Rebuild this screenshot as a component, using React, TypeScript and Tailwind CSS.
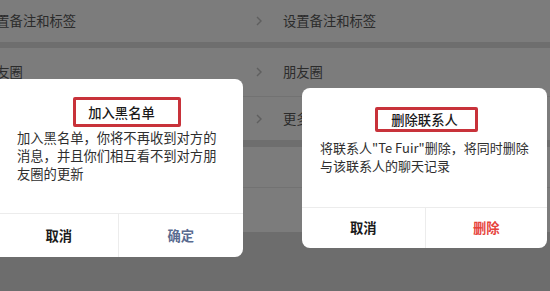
function Chevron() {
    return (
        <svg width="6" height="10" viewBox="0 0 6 10" className="shrink-0">
            <polyline points="1,1 5,5 1,9" fill="none" stroke="#5f5f5f" strokeWidth="1.4" />
        </svg>
    );
}

function Row({ h, left, right, chevron = true }: { h: string; left: string; right: string; chevron?: boolean }) {
    return (
        <div className={`flex ${h}`}>
            {/* left phone */}
            <div className="w-[275px] flex items-center justify-between overflow-hidden pr-[13px]">
                <span className="-ml-[17px] whitespace-nowrap">{left}</span>
                {chevron && <Chevron />}
            </div>
            {/* right phone */}
            <div className="flex-1 flex items-center pl-[8px] overflow-hidden">
                <span className="whitespace-nowrap">{right}</span>
            </div>
        </div>
    );
}

export default function App() {
    return (
        <div className="relative w-[550px] h-[291px] overflow-hidden bg-[#6d6d6d] text-[13.3px] text-[#2b2b2b] font-['Noto_Sans_CJK_SC','Noto_Sans',sans-serif]">

            {/* BACKGROUND LIST */}
            <div className="flex flex-col bg-[#7c7c7c]">
                <Row h="h-[42px]" left="设置备注和标签" right="设置备注和标签" />
                <div className="h-[6px] bg-[#6e6e6e]" />
                <Row h="h-[49px] border-b border-[#727272]" left="朋友圈" right="朋友圈" />
                <Row h="h-[43px]" left="更多信息" right="更多信息" />
                <div className="h-[7px] bg-[#6e6e6e]" />
                <Row h="h-[41px] border-b border-[#727272]" left="" right="" chevron={false} />
                <Row h="h-[44px]" left="" right="" chevron={false} />
            </div>

            {/* LEFT DIALOG */}
            <div className="absolute left-[-8px] top-[79px] w-[251px] h-[178px] bg-white rounded-lg flex flex-col">
                <div className="pt-[24px] pl-[8px] text-center leading-[20px] text-[#1a1a1a] font-medium">
                    加入黑名单
                </div>
                <div className="mt-[6px] pl-[25px] pr-[20px] leading-[18px] text-[#2e2e2e]">
                    加入黑名单，你将不再收到对方的消息，并且你们相互看不到对方朋友圈的更新
                </div>
                <div className="flex-1" />
                <div className="grid grid-cols-2 h-[44px] border-t border-[#ececec] font-bold">
                    <div className="flex items-center justify-center pl-[8px] text-[#1a1a1a]">取消</div>
                    <div className="flex items-center justify-center border-l border-[#ececec] text-[#5a6b90]">确定</div>
                </div>

                {/* annotation */}
                <div className="absolute left-[81px] top-[18px] w-[108px] h-[30px] border-[3px] border-[#c8323a] rounded-[2px]" />
            </div>

            {/* RIGHT DIALOG */}
            <div className="absolute left-[302px] top-[88px] w-[245px] h-[160px] bg-white rounded-lg flex flex-col">
                <div className="pt-[22px] text-center leading-[20px] text-[#1a1a1a] font-medium">
                    删除联系人
                </div>
                <div className="mt-[9px] pl-[18px] text-[13px] leading-[18px] text-[#2e2e2e] flex flex-col whitespace-nowrap">
                    <span>将联系人"Te Fuir"删除，将同时删除</span>
                    <span>与该联系人的聊天记录</span>
                </div>
                <div className="flex-1" />
                <div className="grid grid-cols-2 h-[41px] border-t border-[#ececec] font-bold">
                    <div className="flex items-center justify-center text-[#1a1a1a]">取消</div>
                    <div className="flex items-center justify-center border-l border-[#ececec] text-[#e6433c]">删除</div>
                </div>

                {/* annotation */}
                <div className="absolute left-[73px] top-[19px] w-[103px] h-[25px] border-[3px] border-[#c8323a] rounded-[2px]" />
            </div>
        </div>
    );
}
